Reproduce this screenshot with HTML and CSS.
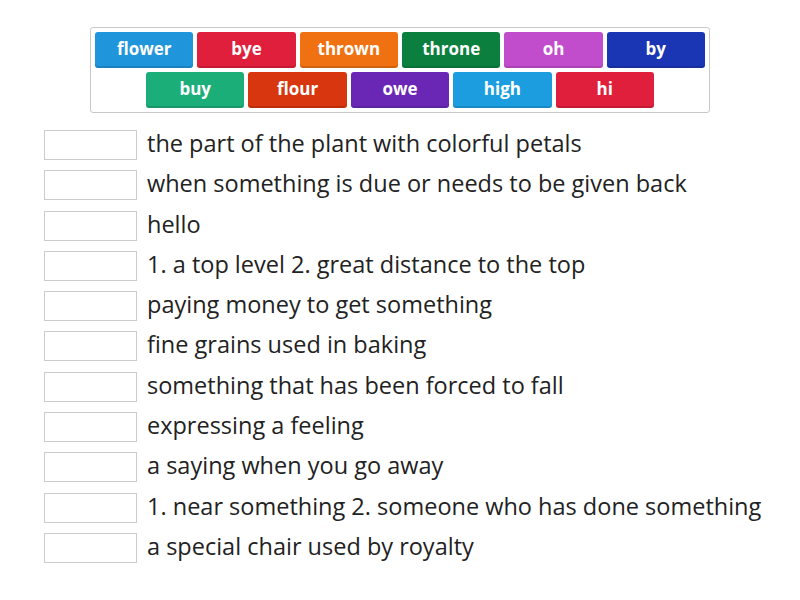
FILE: index.html
```html
<!DOCTYPE html>
<html>
<head>
<meta charset="utf-8">
<link rel="stylesheet" href="styles.css">
</head>
<body>
<div class="bank">
  <div class="bank-row">
    <div class="tile c-flower">flower</div>
    <div class="tile c-bye">bye</div>
    <div class="tile c-thrown">thrown</div>
    <div class="tile c-throne">throne</div>
    <div class="tile c-oh">oh</div>
    <div class="tile c-by">by</div>
  </div>
  <div class="bank-row">
    <div class="tile c-buy">buy</div>
    <div class="tile c-flour">flour</div>
    <div class="tile c-owe">owe</div>
    <div class="tile c-high">high</div>
    <div class="tile c-hi">hi</div>
  </div>
</div>
<div class="list">
  <div class="item"><div class="slot"></div><div class="def">the part of the plant with colorful petals</div></div>
  <div class="item"><div class="slot"></div><div class="def">when something is due or needs to be given back</div></div>
  <div class="item"><div class="slot"></div><div class="def">hello</div></div>
  <div class="item"><div class="slot"></div><div class="def">1. a top level 2. great distance to the top</div></div>
  <div class="item"><div class="slot"></div><div class="def">paying money to get something</div></div>
  <div class="item"><div class="slot"></div><div class="def">fine grains used in baking</div></div>
  <div class="item"><div class="slot"></div><div class="def">something that has been forced to fall</div></div>
  <div class="item"><div class="slot"></div><div class="def">expressing a feeling</div></div>
  <div class="item"><div class="slot"></div><div class="def">a saying when you go away</div></div>
  <div class="item"><div class="slot"></div><div class="def">1. near something 2. someone who has done something</div></div>
  <div class="item"><div class="slot"></div><div class="def">a special chair used by royalty</div></div>
</div>
</body>
</html>
```
FILE: styles.css
```css
html, body {
  margin: 0;
  padding: 0;
  background: #fff;
  font-family: "Open Sans", "Liberation Sans", sans-serif;
}
.bank {
  box-sizing: border-box;
  width: 620px;
  margin: 27px 0 0 90px;
  padding: 4px;
  border: 1px solid #c8c8c8;
  border-radius: 3px;
  display: flex;
  flex-direction: column;
  gap: 4px;
}
.bank-row {
  display: flex;
  justify-content: center;
  gap: 4px;
}
.tile {
  box-sizing: border-box;
  width: 98.4px;
  height: 36px;
  border-radius: 3px;
  color: #fff;
  font-weight: 700;
  font-size: 17px;
  display: flex;
  align-items: center;
  justify-content: center;
  box-shadow: inset 0 -2px 0 rgba(0,0,0,0.12);
  padding-bottom: 3px;
}
.c-flower { background: #1f95db; }
.c-bye { background: #df1f3b; }
.c-thrown { background: #f07111; }
.c-throne { background: #0a7f3e; }
.c-oh { background: #c24dcc; }
.c-by { background: #1b36b5; }
.c-buy { background: #1cae79; }
.c-flour { background: #d8360e; }
.c-owe { background: #6a27b6; }
.c-high { background: #1c9ddf; }
.c-hi { background: #df1f3b; }
.list {
  margin: 17px 0 0 44px;
  display: flex;
  flex-direction: column;
  gap: 10.3px;
}
.item {
  display: flex;
  align-items: center;
  gap: 10px;
  height: 30px;
}
.slot {
  box-sizing: border-box;
  width: 93px;
  height: 30px;
  border: 1px solid #cccccc;
  flex: none;
}
.def {
  font-size: 23.5px;
  color: #222;
  white-space: nowrap;
  line-height: 30px;
  margin-top: -4px;
}
```
